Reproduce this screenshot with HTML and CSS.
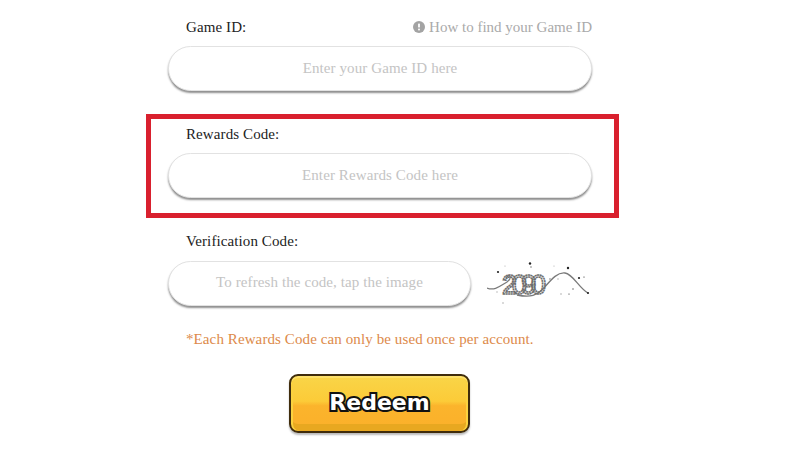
FILE: index.html
```html
<!DOCTYPE html>
<html lang="en">

<head>
    <meta charset="UTF-8">
    <meta name="viewport" content="width=device-width, initial-scale=1.0">
    <title>Redeem Rewards Code</title>
    <link rel="stylesheet" href="styles.css">
</head>

<body>
    <form class="redeem-form">
        <div class="form-group">
            <div class="label-row">
                <label for="gameId">Game ID:</label>
                <a class="help-link" href="#">
                    <svg class="help-icon" viewBox="0 0 12 12" aria-hidden="true">
                        <circle cx="6" cy="6" r="6" fill="#a3a3a3"/>
                        <rect x="5.1" y="2.6" width="1.8" height="4" rx="0.6" fill="#fff"/>
                        <rect x="5.1" y="7.6" width="1.8" height="1.8" rx="0.6" fill="#fff"/>
                    </svg>
                    How to find your Game ID
                </a>
            </div>
            <input type="text" id="gameId" class="form-input" placeholder="Enter your Game ID here">
        </div>

        <div class="form-group highlight">
            <div class="label-row">
                <label for="rewardsCode">Rewards Code:</label>
            </div>
            <input type="text" id="rewardsCode" class="form-input" placeholder="Enter Rewards Code here">
        </div>

        <div class="form-group">
            <div class="label-row captcha-label">
                <label for="verifyCode">Verification Code:</label>
            </div>
            <div class="captcha-row">
                <input type="text" id="verifyCode" class="form-input" placeholder="To refresh the code, tap the image">
                <svg class="captcha" viewBox="0 0 110 44" aria-label="Verification image">
                    <path d="M0 26 C8 29 13 24 20 20 C26 15 22 11 19 16 M30 33 C44 36 50 33 56 27 C64 18 70 10 78 11 C86 12 92 26 101 31" fill="none" stroke="#7a7a7a" stroke-width="1.3"/>
                    <text class="captcha-text" x="15" y="32" textLength="44">2090</text>
                    <g fill="#222">
                        <circle cx="43" cy="1.5" r="1.2"/>
                        <circle cx="81" cy="6" r="1.2"/>
                        <circle cx="11" cy="10" r="1.1"/>
                        <circle cx="92" cy="16" r="1.1"/>
                        <circle cx="97" cy="15" r="0.6"/>
                        <circle cx="101" cy="31" r="1.1"/>
                        <circle cx="82" cy="32" r="0.6"/>
                    </g>
                    <g fill="#aaa">
                        <circle cx="18" cy="4" r="0.6"/>
                        <circle cx="44" cy="5" r="0.9"/>
                        <circle cx="67" cy="4" r="0.6"/>
                        <circle cx="63" cy="17" r="0.9"/>
                        <circle cx="71" cy="17" r="0.7"/>
                        <circle cx="86" cy="27" r="1"/>
                        <circle cx="74" cy="32" r="0.8"/>
                        <circle cx="16" cy="41" r="0.8"/>
                        <circle cx="10" cy="30" r="0.7"/>
                    </g>
                </svg>
            </div>
        </div>

        <p class="form-note">*Each Rewards Code can only be used once per account.</p>

        <div class="button-container">
            <button type="submit" class="redeem-btn">Redeem</button>
        </div>
    </form>
</body>

</html>
```

FILE: styles.css
```css
/* Resetting some basic styles */
* {
    margin: 0;
    padding: 0;
    box-sizing: border-box;
}

body {
    font-family: 'Liberation Serif', 'Times New Roman', serif;
    background-color: #fff;
    color: #222;
    height: 450px;
    overflow: hidden;
}

/* Form column */
.redeem-form {
    width: 424px;
    margin-left: 168px;
    padding-top: 18px;
}

.form-group {
    margin-bottom: 23px;
}

/* Red frame round the rewards code */
.form-group.highlight {
    width: 473px;
    margin-left: -22px;
    margin-bottom: 14px;
    padding: 6px 22px 15px 17px;
    border: 5px solid #d9202e;
}

.label-row {
    display: flex;
    justify-content: space-between;
    align-items: center;
    height: 18px;
    padding-left: 18px;
    margin-bottom: 10px;
    font-size: 15px;
}

.captcha-label {
    margin-bottom: 11px;
}

label {
    letter-spacing: 0.1px;
}

.help-link {
    display: flex;
    align-items: center;
    gap: 4px;
    color: #aaa;
    font-size: 15px;
    text-decoration: none;
}

.help-icon {
    width: 12px;
    height: 12px;
}

/* Pill shaped inputs */
.form-input {
    display: block;
    width: 100%;
    height: 45px;
    border: 1px solid #e2e2e2;
    border-radius: 23px;
    background-color: #fff;
    box-shadow: 0 2px 2px #8f8f8f;
    font-family: inherit;
    font-size: 15px;
    letter-spacing: 0.1px;
    text-align: center;
    outline: none;
}

.form-input::placeholder {
    color: #c4c4c4;
    opacity: 1;
}

.captcha-row {
    display: flex;
    align-items: center;
    gap: 16px;
}

.captcha-row .form-input {
    width: 303px;
    flex-shrink: 0;
    padding-bottom: 2px;
}

.captcha {
    width: 110px;
    height: 44px;
    flex-shrink: 0;
}

.captcha-text {
    font-family: 'Liberation Sans', sans-serif;
    font-size: 27px;
    fill: none;
    stroke: #6e6e6e;
    stroke-width: 1.6;
    stroke-dasharray: 2 0.5;
}

.form-note {
    margin-top: 25px;
    padding-left: 18px;
    color: #dd8a4a;
    font-size: 15px;
    letter-spacing: 0.1px;
}

.button-container {
    display: flex;
    padding-left: 121px;
    margin-top: 26px;
}

/* Redeem button */
.redeem-btn {
    width: 181px;
    height: 59px;
    padding-bottom: 2px;
    border: 2px solid #3f2c0c;
    border-radius: 9px;
    background: linear-gradient(#f9d548 0%, #fccb38 46%, #fbb42c 54%, #fbb02a 100%);
    box-shadow: inset 0 2px 0 #fde06a, inset 2px 0 0 #fbd23f, inset -2px 0 0 #fbd23f, inset 0 -7px 0 #e8a820, 0 2px 2px #bbb;
    color: #fff;
    font-family: 'DejaVu Sans', sans-serif;
    font-size: 22px;
    font-weight: 700;
    -webkit-text-stroke: 4px #111;
    paint-order: stroke fill;
    cursor: pointer;
}
```
